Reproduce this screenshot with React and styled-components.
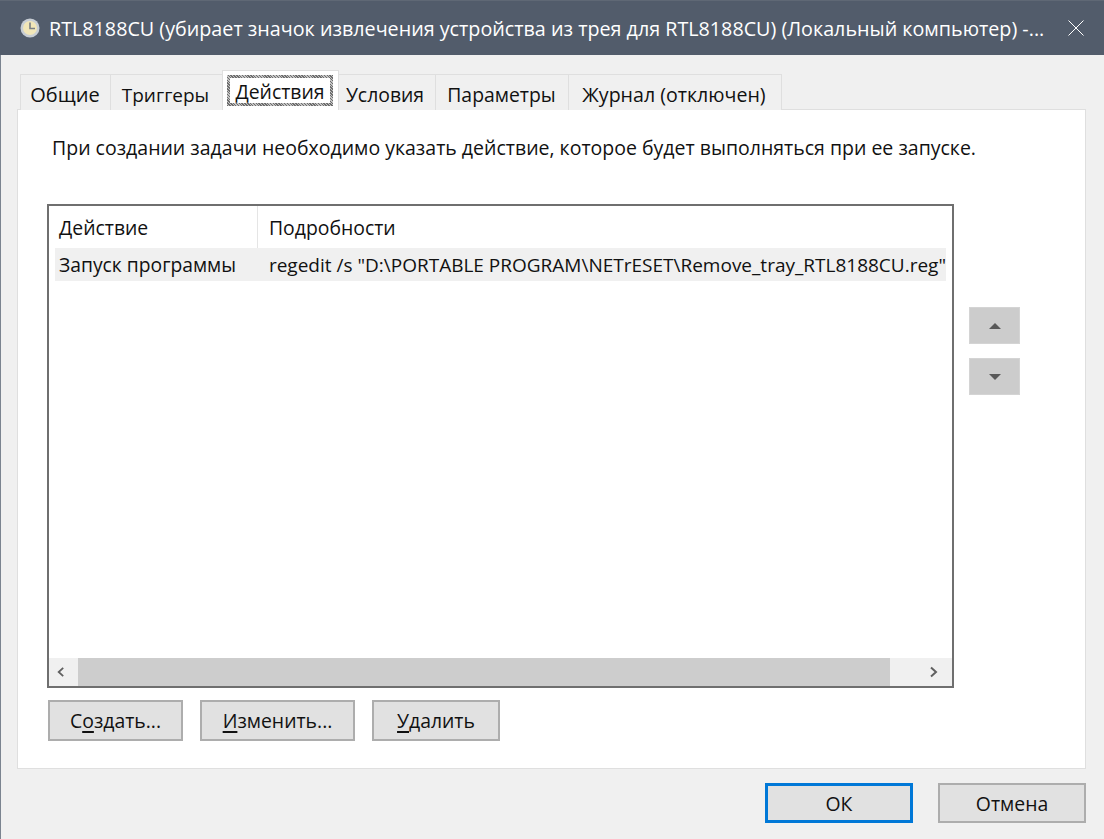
import React from 'react';
import styled, { createGlobalStyle } from 'styled-components';

const GlobalStyle = createGlobalStyle`
  html, body {
    margin: 0;
    padding: 0;
    background: #f0f0f0;
  }
  * {
    box-sizing: border-box;
  }
`;

const font = '"Open Sans", "Noto Sans", sans-serif';

const Window = styled.div`
  width: 1104px;
  height: 839px;
  display: flex;
  flex-direction: column;
  background: #f0f0f0;
  font-family: ${font};
  font-size: 19.4px;
  color: #111111;
  overflow: hidden;
`;

/**
 * Title bar
 */

const TitleBar = styled.div`
  height: 55px;
  flex: none;
  display: flex;
  align-items: center;
  padding: 0 20px;
  background: #525c6b;
  border-top: 1px solid #5f6875;
  color: #ffffff;
`;

const TitleText = styled.div`
  flex: 1;
  margin-left: 9px;
  font-size: 19.73px;
  white-space: nowrap;
`;

const CloseIcon = styled.svg`
  width: 16px;
  height: 16px;
`;

/**
 * Tabs
 */

const Body = styled.div`
  flex: 1;
  display: flex;
  flex-direction: column;
  padding: 16px 18px 0 16px;
  border-left: 1px solid #7b8490;
`;

const TabStrip = styled.div`
  display: flex;
  align-items: flex-end;
  height: 39px;
  padding-left: 3px;
  position: relative;
  z-index: 1;
  margin-bottom: -1px;
`;

const Tab = styled.div`
  width: ${(props) => props.width}px;
  height: 36px;
  display: flex;
  align-items: center;
  justify-content: center;
  padding: 4px ${(props) => props.pull || 0}px 0 0;
  font-size: ${(props) => props.size || '19.4px'};
  background: #f0f0f0;
  border: 1px solid #dfdfdf;
  border-left: ${(props) => (props.first ? '1px solid #dfdfdf' : 'none')};
  border-bottom: none;
`;

const ActiveTab = styled.div`
  width: ${(props) => props.width}px;
  height: 40px;
  margin-left: -1px;
  padding: 4px 5px 5px 4px;
  background: #ffffff;
  border: 1px solid #dfdfdf;
  border-bottom: none;
`;

const FocusLabel = styled.div`
  height: 31px;
  display: flex;
  align-items: center;
  justify-content: center;
  padding-top: 2px;
  border: 3px solid #7f7f7f;
  border-image: repeating-linear-gradient(45deg, #6d6d6d 0 1px, #c4c4c4 1px 2px) 3;
`;

const Panel = styled.div`
  height: 660px;
  display: flex;
  flex-direction: column;
  background: #ffffff;
  border: 1px solid #dfdfdf;
  padding: 25px 30px 0 29px;
`;

const Description = styled.div`
  padding-left: 5px;
  height: 26px;
  line-height: 26px;
  font-size: 19.5px;
  white-space: nowrap;
`;

/**
 * Action list
 */

const ListRow = styled.div`
  display: flex;
  margin-top: 43px;
`;

const ListBox = styled.div`
  width: 907px;
  height: 484px;
  display: flex;
  flex-direction: column;
  border: 2px solid #6f6f6f;
  background: #ffffff;
`;

const HeaderRow = styled.div`
  display: flex;
  height: 42px;
  flex: none;
`;

const HeaderCell = styled.div`
  width: ${(props) => props.width};
  flex: ${(props) => (props.width ? 'none' : '1')};
  display: flex;
  align-items: center;
  padding-left: ${(props) => props.inset}px;
  padding-top: 1px;
  border-right: ${(props) => (props.divider ? '1px solid #e5e5e5' : 'none')};
`;

const DataRow = styled.div`
  display: flex;
  height: 33px;
  margin: 0 6px;
  flex: none;
  align-items: center;
  background: #f0f0f0;
  white-space: nowrap;
`;

const DataCell = styled.div`
  width: ${(props) => props.width};
  padding-left: ${(props) => props.inset}px;
  font-size: ${(props) => props.size || '19.3px'};
`;

const ListSpace = styled.div`
  flex: 1;
`;

const ScrollBar = styled.div`
  height: 28px;
  flex: none;
  display: flex;
  background: #f0f0f0;
`;

const ScrollButton = styled.div`
  width: ${(props) => props.width}px;
  display: flex;
  align-items: center;
  justify-content: ${(props) => (props.end ? 'flex-end' : 'flex-start')};
  padding: 0 13px 0 7px;
`;

const ScrollThumb = styled.div`
  flex: 1;
  background: #cdcdcd;
`;

const SideColumn = styled.div`
  display: flex;
  flex-direction: column;
  gap: 14px;
  margin: 103px 0 0 15px;
`;

const ArrowButton = styled.div`
  width: 51px;
  height: 37px;
  display: flex;
  align-items: center;
  justify-content: center;
  background: #cccccc;
  border: 1px solid #d4d4d4;
`;

/**
 * Buttons
 */

const ButtonRow = styled.div`
  display: flex;
  gap: 17px;
  margin-top: 12px;
  padding-left: 1px;
`;

const Button = styled.div`
  width: ${(props) => props.width}px;
  height: ${(props) => props.height || 41}px;
  display: flex;
  align-items: center;
  justify-content: center;
  background: #e1e1e1;
  border: ${(props) => (props.primary ? '3px solid #0078d7' : '2px solid #adadad')};
  white-space: nowrap;
`;

const Footer = styled.div`
  display: flex;
  justify-content: flex-end;
  gap: 25px;
  margin-top: 14px;
`;

const Key = styled.span`
  text-decoration: underline;
  text-underline-offset: 3px;
  text-decoration-thickness: 2px;
`;

const ClockIcon = () => (
  <svg width="20" height="20" viewBox="0 0 20 20">
    <circle cx="10" cy="10" r="9.5" fill="#c7cdd4" />
    <circle cx="10" cy="10" r="7" fill="#f1e6b8" />
    <path d="M10 4.5V10.5H15" fill="none" stroke="#7a7f86" strokeWidth="1.6" />
  </svg>
);

const Chevron = ({ left }) => (
  <svg width="10" height="12" viewBox="0 0 10 12">
    <path
      d={left ? 'M8 1.5L3 6l5 4.5' : 'M2 1.5L7 6l-5 4.5'}
      fill="none"
      stroke="#606060"
      strokeWidth="2"
    />
  </svg>
);

const Triangle = ({ down }) => (
  <svg width="12" height="8" viewBox="0 0 12 8">
    <path d={down ? 'M0 1h12L6 7z' : 'M6 1l6 6H0z'} fill="#595959" />
  </svg>
);

export default function App() {
  return (
    <Window>
      <GlobalStyle />
      <TitleBar>
        <ClockIcon />
        <TitleText>
          RTL8188CU (убирает значок извлечения устройства из трея для RTL8188CU) (Локальный компьютер) -...
        </TitleText>
        <CloseIcon viewBox="0 0 16 16">
          <path d="M0.5 0.5L15.5 15.5M15.5 0.5L0.5 15.5" stroke="#ffffff" strokeWidth="1" fill="none" />
        </CloseIcon>
      </TitleBar>
      <Body>
        <TabStrip>
          <Tab first width={91} size="20px" pull={1}>Общие</Tab>
          <Tab width={112} size="19px" pull={2}>Триггеры</Tab>
          <ActiveTab width={117}>
            <FocusLabel>Действия</FocusLabel>
          </ActiveTab>
          <Tab width={97} pull={4}>Условия</Tab>
          <Tab width={133} pull={1}>Параметры</Tab>
          <Tab width={213} size="19.6px" pull={2}>Журнал (отключен)</Tab>
        </TabStrip>
        <Panel>
          <Description>
            При создании задачи необходимо указать действие, которое будет выполняться при ее запуске.
          </Description>
          <ListRow>
            <ListBox>
              <HeaderRow>
                <HeaderCell divider width="209px" inset={10}>Действие</HeaderCell>
                <HeaderCell inset={11}>Подробности</HeaderCell>
              </HeaderRow>
              <DataRow>
                <DataCell width="203px" inset={4}>Запуск программы</DataCell>
                <DataCell inset={12} size="19px">
                  regedit /s "D:\PORTABLE PROGRAM\NETrESET\Remove_tray_RTL8188CU.reg"
                </DataCell>
              </DataRow>
              <ListSpace />
              <ScrollBar>
                <ScrollButton width={29}>
                  <Chevron left />
                </ScrollButton>
                <ScrollThumb />
                <ScrollButton end width={62}>
                  <Chevron />
                </ScrollButton>
              </ScrollBar>
            </ListBox>
            <SideColumn>
              <ArrowButton>
                <Triangle />
              </ArrowButton>
              <ArrowButton>
                <Triangle down />
              </ArrowButton>
            </SideColumn>
          </ListRow>
          <ButtonRow>
            <Button width={135}>С<Key>о</Key>здать...</Button>
            <Button width={155}><Key>И</Key>зменить...</Button>
            <Button width={128}><Key>У</Key>далить</Button>
          </ButtonRow>
        </Panel>
        <Footer>
          <Button primary width={148} height={40}>ОК</Button>
          <Button width={148} height={40}>Отмена</Button>
        </Footer>
      </Body>
    </Window>
  );
}
